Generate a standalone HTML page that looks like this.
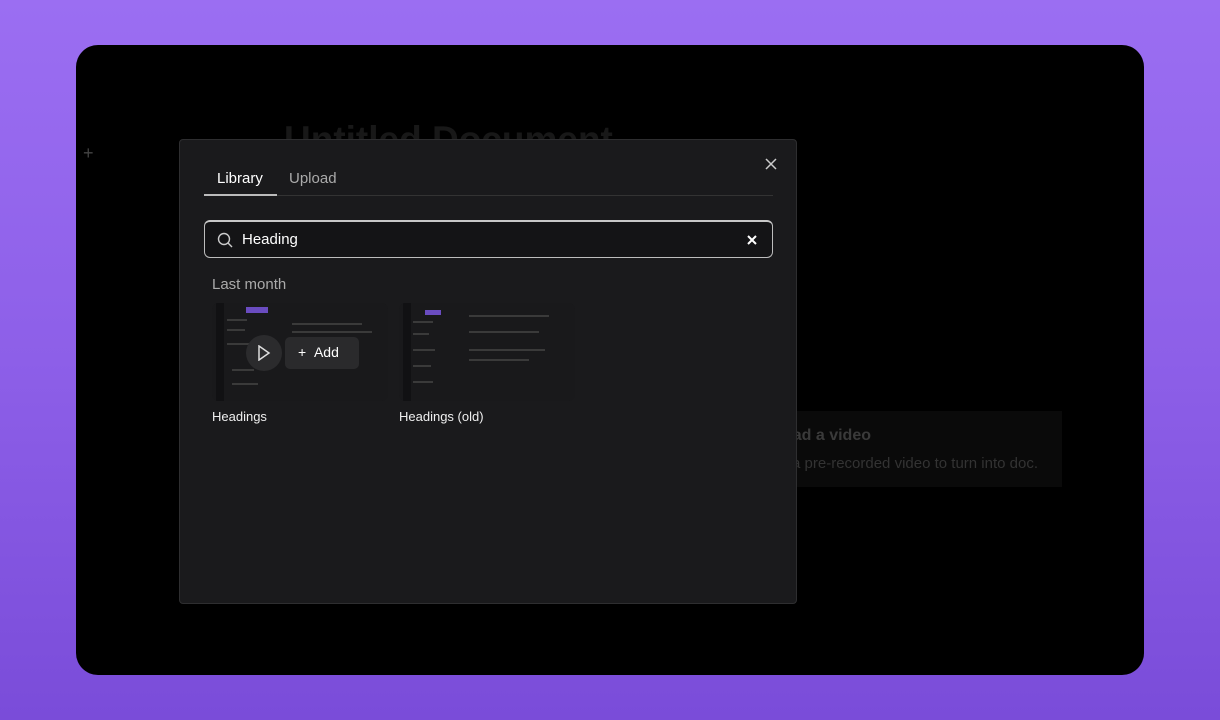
<!DOCTYPE html>
<html><head><style>
*{margin:0;padding:0;box-sizing:border-box}
body{width:1220px;height:720px;overflow:hidden;background:linear-gradient(180deg,#9b6ef2 0%,#8d5fe8 50%,#7a4cd9 100%);font-family:"Liberation Sans",sans-serif;position:relative}
.card{position:absolute;left:76px;top:45px;width:1068px;height:630px;background:#000;border-radius:22px;overflow:hidden}
.title{position:absolute;left:208px;top:74px;font-size:37px;font-weight:bold;color:#181818}
.vid{position:absolute;left:700px;top:366px;width:286px;height:76px;background:#0a0a0a}
.vid .h{position:absolute;right:191px;top:16px;color:#3a3a3a;font-weight:bold;font-size:16px;white-space:nowrap}
.vid .s{position:absolute;right:24px;top:44px;color:#333;font-size:15px;white-space:nowrap}
.modal{position:absolute;left:179px;top:139px;width:618px;height:465px;background:#1a1a1c;border:1px solid #2e2e30;border-radius:4px}
.tab{position:absolute;top:30px;font-size:15px}
.search{position:absolute;left:24px;top:80px;width:569px;height:38px;border:1.5px solid #bdbdbd;border-top:2px solid #c8c8c8;border-radius:6px;background:#141416}
.thumb{position:absolute;top:163px;width:176px;height:98px;background:#19191b;border-radius:6px;overflow:hidden}
.lbl{position:absolute;top:269px;color:#eee;font-size:13px}
.ln{position:absolute;height:2px;background:#3a3a3a}
</style></head><body>
<div class="card">
<div class="title">Untitled Document</div>
<div style="position:absolute;left:7px;top:98px;color:#444;font-size:18px">+</div>
<div class="vid"><div class="h">Upload a video</div><div class="s">Upload a pre-recorded video to turn into doc.</div></div>
</div>
<div class="modal">
<div class="tab" style="left:37px;color:#fff">Library</div>
<div class="tab" style="left:109px;color:#aaa">Upload</div>
<div style="position:absolute;left:24px;top:55px;width:569px;height:1px;background:#333"></div>
<div style="position:absolute;left:24px;top:54px;width:73px;height:2px;background:#bbb"></div>
<svg style="position:absolute;right:19px;top:18px" width="12" height="12" viewBox="0 0 12 12"><path d="M1 1L11 11M11 1L1 11" stroke="#ccc" stroke-width="1.5"/></svg>
<div class="search">
<svg style="position:absolute;left:12px;top:10px" width="16" height="16" viewBox="0 0 16 16"><circle cx="7" cy="7" r="5.5" fill="none" stroke="#ccc" stroke-width="1.4"/><path d="M11 11L15 15" stroke="#ccc" stroke-width="1.4"/></svg>
<div style="position:absolute;left:37px;top:9px;color:#fff;font-size:15px">Heading</div>
<svg style="position:absolute;right:15px;top:13px" width="10" height="10" viewBox="0 0 10 10"><path d="M1 1L9 9M9 1L1 9" stroke="#fff" stroke-width="2"/></svg>
</div>
<div style="position:absolute;left:32px;top:136px;color:#aaa;font-size:15px">Last month</div>
<div class="thumb" style="left:32px">
<div style="position:absolute;left:4px;top:0;width:8px;height:98px;background:#111113"></div>
<div style="position:absolute;left:34px;top:4px;width:22px;height:6px;background:#6a4cc0"></div>
<div class="ln" style="left:15px;top:16px;width:20px"></div><div class="ln" style="left:15px;top:26px;width:18px"></div><div class="ln" style="left:15px;top:40px;width:24px"></div><div class="ln" style="left:20px;top:66px;width:22px"></div><div class="ln" style="left:20px;top:80px;width:26px"></div>
<div class="ln" style="left:80px;top:20px;width:70px"></div><div class="ln" style="left:80px;top:28px;width:80px"></div>
<div style="position:absolute;left:34px;top:32px;width:36px;height:36px;border-radius:50%;background:#2b2b2d"></div>
<svg style="position:absolute;left:45px;top:42px" width="14" height="16" viewBox="0 0 14 16"><path d="M2 1L12 8L2 15Z" fill="none" stroke="#ddd" stroke-width="1.5"/></svg>
<div style="position:absolute;left:73px;top:34px;width:74px;height:32px;border-radius:5px;background:#2a2a2c"></div>
<div style="position:absolute;left:86px;top:41px;color:#fff;font-size:14px">+&nbsp;&nbsp;Add</div>
</div>
<div class="thumb" style="left:219px">
<div style="position:absolute;left:4px;top:0;width:8px;height:98px;background:#111113"></div>
<div style="position:absolute;left:26px;top:7px;width:16px;height:5px;background:#6a4cc0"></div>
<div class="ln" style="left:14px;top:18px;width:20px"></div><div class="ln" style="left:14px;top:30px;width:16px"></div><div class="ln" style="left:14px;top:46px;width:22px"></div><div class="ln" style="left:14px;top:62px;width:18px"></div><div class="ln" style="left:14px;top:78px;width:20px"></div>
<div class="ln" style="left:70px;top:12px;width:80px"></div><div class="ln" style="left:70px;top:28px;width:70px"></div><div class="ln" style="left:70px;top:46px;width:76px"></div><div class="ln" style="left:70px;top:56px;width:60px"></div>
</div>
<div class="lbl" style="left:32px">Headings</div>
<div class="lbl" style="left:219px">Headings (old)</div>
</div>
</body></html>
